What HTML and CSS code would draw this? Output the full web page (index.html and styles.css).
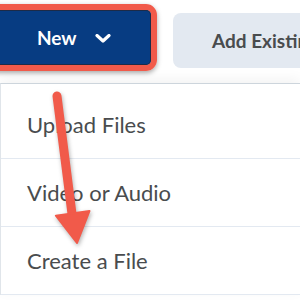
FILE: index.html
```html
<!DOCTYPE html>
<html lang="en">
<head>
  <meta charset="UTF-8">
  <title>New menu</title>
  <link rel="stylesheet" href="styles.css">
</head>
<body>
  <div class="toolbar">
    <div class="callout">
      <button class="btn-primary">New <span class="chevron"><svg width="16" height="9" viewBox="0 0 16 9"><path d="M2 1.5 L8 7 L14 1.5" fill="none" stroke="#fff" stroke-width="3.2" stroke-linecap="round" stroke-linejoin="round"/></svg></span></button>
    </div>
    <button class="btn-secondary">Add Existing</button>
  </div>
  <ul class="menu">
    <li>Upload Files</li>
    <li>Video or Audio</li>
    <li>Create a File</li>
  </ul>
  <svg class="arrow" width="300" height="300" viewBox="0 0 300 300">
    <line x1="57" y1="96" x2="72" y2="214" stroke="#f15a4a" stroke-width="9" stroke-linecap="round"/>
    <polygon points="55.9,215.7 89.5,210.9 77,243" fill="#f15a4a" stroke="#f15a4a" stroke-width="2" stroke-linejoin="round"/>
  </svg>
</body>
</html>
```

FILE: styles.css
```css
:root {
  --color-primary: #073c82;
  --color-callout: #f15a4a;
  --color-text: #494c4e;
  --color-line: #e3e9f1;
  --font-main: 'Lato', 'Noto Sans', sans-serif;
}

body {
  margin: 0;
  background: #fff;
  font-family: var(--font-main);
  color: var(--color-text);
  overflow: hidden;
  width: 300px;
  height: 300px;
  position: relative;
}

.toolbar {
  display: flex;
  align-items: flex-start;
  gap: 16px;
  margin-left: -13px;
  padding-top: 4px;
  height: 79px;
  white-space: nowrap;
}

.callout {
  border: 6px solid var(--color-callout);
  border-radius: 11px;
  box-shadow: 0 2px 5px rgba(0, 0, 0, 0.35);
  flex-shrink: 0;
}

.btn-primary {
  display: flex;
  align-items: center;
  gap: 18px;
  width: 158px;
  height: 55px;
  padding: 0 0 0 44px;
  background: var(--color-primary);
  color: #fff;
  border: none;
  border-radius: 5px;
  box-shadow: inset 0 0 0 1px #1c2b48;
  font-family: var(--font-main);
  font-size: 19px;
  font-weight: bold;
}

.chevron {
  display: flex;
  padding-top: 2px;
}

.btn-secondary {
  flex-shrink: 0;
  margin-top: 9px;
  height: 55px;
  padding: 0 39px;
  background: var(--color-line);
  color: var(--color-text);
  border: none;
  border-radius: 8px;
  font-family: var(--font-main);
  font-size: 19px;
  font-weight: bold;
}

.menu {
  list-style: none;
  margin: 0;
  padding: 7px 0 0;
  border-top: 1px solid #cdd5dc;
  border-left: 1px solid #e0e5ea;
  box-shadow: 0 -4px 12px rgba(0, 0, 0, 0.05);
}

.menu li {
  height: 67px;
  line-height: 67px;
  padding-left: 26px;
  font-size: 22px;
  border-bottom: 1px solid var(--color-line);
}

.arrow {
  position: absolute;
  left: 0;
  top: 0;
  filter: drop-shadow(1px 2px 2px rgba(0, 0, 0, 0.3));
}
```
